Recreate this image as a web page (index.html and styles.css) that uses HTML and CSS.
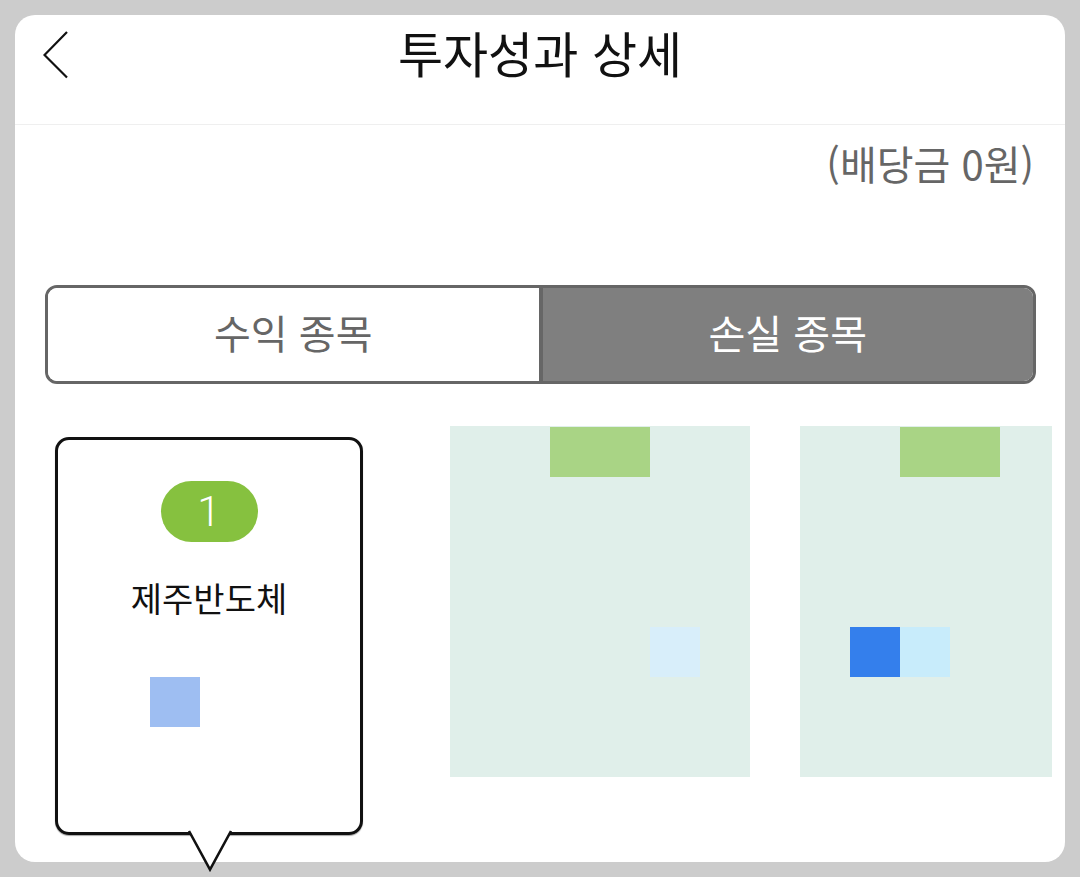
FILE: index.html
```html
<!DOCTYPE html>
<html lang="ko">
<head>
<meta charset="utf-8">
<title>투자성과 상세</title>
<link rel="stylesheet" href="styles.css">
</head>
<body>
<div class="panel">
  <header class="header">
    <button class="back" aria-label="뒤로">
      <svg width="26" height="48" viewBox="0 0 26 48"><polyline points="24,1 1.5,24 24,46.5" fill="none" stroke="#111" stroke-width="2.2"/></svg>
    </button>
    <h1 class="title">투자성과 상세</h1>
    <span></span>
  </header>
  <div class="dividend">(배당금 0원)</div>
  <div class="tabs">
    <div class="tab tab-off">수익 종목</div>
    <div class="tab tab-on">손실 종목</div>
  </div>
  <div class="content">
    <div class="callout">
      <div class="badge">1</div>
      <div class="name">제주반도체</div>
      <div class="cell cell-mid"></div>
      <svg class="pointer" width="46" height="42" viewBox="0 0 46 42"><polyline points="1,0 22,38.5 43,0" fill="#fff" stroke="#111" stroke-width="2.6" stroke-linejoin="miter"/></svg>
    </div>
    <div class="box box-wide">
      <div class="cell cell-green top-a"></div>
      <div class="cell cell-pale pos-a"></div>
    </div>
    <div class="box box-narrow">
      <div class="cell cell-green top-a"></div>
      <div class="cell cell-blue pos-b"></div>
      <div class="cell cell-cyan pos-c"></div>
    </div>
  </div>
</div>
</body>
</html>
```
FILE: styles.css
```css
* { box-sizing: border-box; }
html, body { margin: 0; padding: 0; }
body {
  background: #cccccc;
  font-family: "Noto Sans CJK KR", "Noto Sans", sans-serif;
  width: 1080px;
  height: 877px;
  overflow: hidden;
}
.panel {
  margin: 15px 0 0 15px;
  width: 1050px;
  height: 847px;
  background: #fff;
  border-radius: 20px;
  position: relative;
}
.header {
  height: 110px;
  border-bottom: 1px solid #efefef;
  display: grid;
  grid-template-columns: 1fr auto 1fr;
  align-items: start;
}
.back {
  justify-self: start;
  margin: 16px 0 0 28px;
  padding: 0;
  border: 0;
  background: none;
  width: 26px;
  height: 48px;
}
.back svg { display: block; }
.title {
  margin: 6px 0 0 0;
  font-size: 49px;
  line-height: 62px;
  font-weight: 400;
  color: #111;
  letter-spacing: 0;
}
.dividend {
  text-align: right;
  padding-right: 31px;
  margin-top: 8px;
  font-size: 40px;
  line-height: 60px;
  color: #666;
}
.tabs {
  margin: 92px 0 0 30px;
  width: 991px;
  height: 99px;
  border: 3px solid #666;
  border-radius: 12px;
  overflow: hidden;
  display: flex;
}
.tab {
  flex: 1;
  display: flex;
  align-items: center;
  justify-content: center;
  font-size: 40px;
  padding-bottom: 6px;
}
.tab-off { background: #fff; color: #666; border-right: 4px solid #666; }
.tab-on { background: #7f7f7f; color: #fff; }
.content {
  display: flex;
  align-items: flex-start;
  margin-top: 42px;
  padding-left: 40px;
}
.callout {
  position: relative;
  margin-top: 11px;
  width: 308px;
  height: 398px;
  border: 3px solid #111;
  border-radius: 14px;
  display: flex;
  flex-direction: column;
  align-items: center;
  padding-top: 41px;
  box-shadow: 0 1px 1px rgba(0,0,0,0.35);
}
.badge {
  width: 97px;
  height: 61px;
  border-radius: 31px;
  background: #86c13f;
  color: #fff;
  font-family: Roboto, "Noto Sans", sans-serif;
  font-size: 42px;
  font-weight: 300;
  line-height: 61px;
  text-align: center;
}
.name {
  margin-top: 34px;
  font-size: 34px;
  line-height: 44px;
  color: #111;
}
.cell { width: 50px; height: 50px; }
.cell-mid {
  align-self: flex-start;
  margin: 57px 0 0 92px;
  background: #9ebef2;
}
.pointer {
  position: absolute;
  left: 130px;
  bottom: -41px;
  overflow: visible;
}
.box {
  background: #e0efea;
  height: 351px;
  padding-top: 1px;
  display: grid;
  grid-template-columns: repeat(6, 50px);
  grid-template-rows: repeat(7, 50px);
}
.box-wide { width: 300px; margin-left: 87px; }
.box-narrow { width: 252px; margin-left: 50px; }
.cell-green { background: #a9d485; width: 100px; }
.top-a { grid-column: 3 / span 2; grid-row: 1; }
.cell-pale { background: #d8eefa; }
.pos-a { grid-column: 5; grid-row: 5; }
.cell-blue { background: #347fec; }
.pos-b { grid-column: 2; grid-row: 5; }
.cell-cyan { background: #c8ecfb; }
.pos-c { grid-column: 3; grid-row: 5; }
```
